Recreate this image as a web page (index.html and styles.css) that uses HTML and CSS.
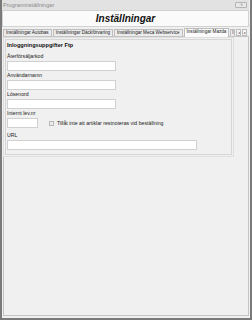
FILE: index.html
```html
<!DOCTYPE html>
<html>
<head>
    <title>Programinställningar</title>
    <link rel="stylesheet" href="styles.css">
</head>
<body>
    <div class="window">
        <div class="titlebar">
            <span class="title">Programinställningar</span>
            <span class="close">&#x2715;</span>
        </div>

        <div class="header">Inställningar</div>

        <div class="tabs">
            <div class="tab">Inställningar Autobas</div>
            <div class="tab">Inställningar Däckförvaring</div>
            <div class="tab">Inställningar Meca Webservice</div>
            <div class="tab active">Inställningar Mazda</div>
            <div class="tab partial">I</div>
            <div class="tab-arrow">&#9666;</div>
            <div class="tab-arrow">&#9656;</div>
        </div>

        <div class="tabpage">
            <div class="group">
                <h4>Inloggningsuppgifter Ftp</h4>

                <label>Återförsäljarkod</label>
                <div class="input"></div>

                <label>Användarnamn</label>
                <div class="input"></div>

                <label>Lösenord</label>
                <div class="input"></div>

                <label>Internt lev.nr</label>
                <div class="row">
                    <div class="input small"></div>
                    <span class="checkbox"></span>
                    <span class="check-label">Tillåt inte att artiklar restnoteras vid beställning</span>
                </div>

                <label>URL</label>
                <div class="input wide"></div>
            </div>
        </div>
    </div>
</body>
</html>
```

FILE: styles.css
```css
* {
    margin: 0;
    padding: 0;
    box-sizing: border-box;
    font-family: 'Liberation Sans', Arial, sans-serif;
}

body {
    background: #f0f0f0;
}

.window {
    width: 252px;
    height: 320px;
    border: 2px solid #7a7a7a;
    border-top: none;
    background: #f0f0f0;
    padding: 0 1px 2px 0;
    display: flex;
    flex-direction: column;
}

.titlebar {
    height: 10px;
    display: flex;
    align-items: center;
    justify-content: space-between;
    background: #e2e2e2;
    padding: 0 2px 0 1px;
}

.title {
    font-size: 5.6px;
    color: #8a8a8a;
}

.close {
    width: 12px;
    height: 6px;
    border: 1px solid #b4b4b4;
    border-radius: 1px;
    background: #e8e8e8;
    color: #8a8a8a;
    font-size: 4px;
    line-height: 4px;
    text-align: center;
}

.header {
    height: 17px;
    background: #fafafa;
    border: 1px solid #d2d2d2;
    text-align: center;
    font-size: 10px;
    font-weight: bold;
    font-style: italic;
    line-height: 15px;
    color: #111;
}

.tabs {
    display: flex;
    align-items: flex-end;
    gap: 1px;
    height: 9px;
    padding-left: 1px;
    position: relative;
    z-index: 1;
}

.tab {
    height: 7px;
    padding: 0 2px;
    border: 1px solid #bdbdbd;
    border-bottom: none;
    background: #ececec;
    font-size: 4.6px;
    line-height: 6px;
    white-space: nowrap;
    color: #222;
}

.tab.active {
    height: 9px;
    margin-bottom: -1px;
    background: #fbfbfb;
}

.tab.partial {
    width: 5px;
    padding: 0 1px;
    overflow: hidden;
}

.tab-arrow {
    width: 5px;
    height: 7px;
    border: 1px solid #bdbdbd;
    background: #f4f4f4;
    font-size: 4px;
    line-height: 5px;
    text-align: center;
    color: #777;
}

.tabpage {
    flex: 1;
    margin-left: 1px;
    border: 1px solid #c4c4c4;
    background: #f0f0f0;
    padding: 2px 0 0 1px;
}

.group {
    width: 227px;
    border: 1px solid #d6d6d6;
    outline: 1px solid #dedede;
    outline-offset: 1px;
    padding: 1px 1px 4px 1px;
}

.group h4 {
    font-size: 5.6px;
    line-height: 8px;
    font-weight: bold;
    color: #111;
    margin-bottom: 3px;
}

label {
    display: block;
    font-size: 5.2px;
    line-height: 8px;
    color: #222;
}

.input {
    width: 109px;
    height: 10px;
    margin-top: 1px;
    background: #fff;
    border: 1px solid #d0d0d0;
}

.input.small {
    width: 31px;
    margin-top: 0;
}

.input.wide {
    width: 190px;
}

.row {
    display: flex;
    align-items: center;
    margin-top: 1px;
    margin-bottom: 3px;
}

.checkbox {
    width: 5px;
    height: 5px;
    margin-left: 11px;
    margin-right: 3px;
    border: 1px solid #b8b8b8;
    background: #ececec;
}

.check-label {
    font-size: 5.2px;
    color: #222;
    white-space: nowrap;
}
```
